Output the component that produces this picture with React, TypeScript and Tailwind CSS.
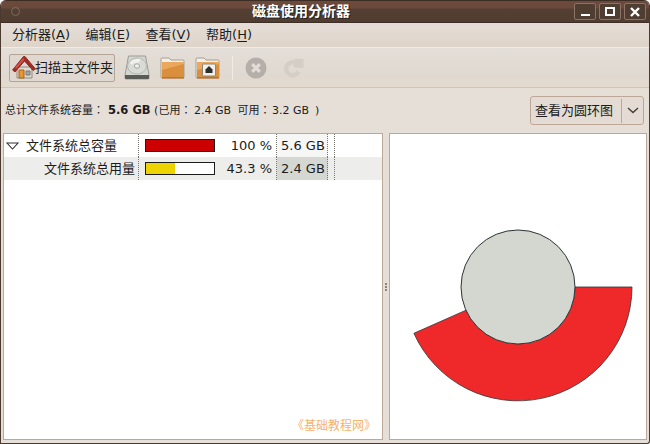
import React from "react";

const uiFont = { fontFamily: '"DejaVu Sans", "Noto Sans CJK SC", sans-serif' };

function HomeIcon() {
  return (
    <svg width="24" height="25" viewBox="0 0 24 25" className="shrink-0">
      <path d="M5 12 H20 V23 H5 Z" fill="#dedbd5" stroke="#8f8b84" />
      <path d="M7 15 H12 V23 H7 Z" fill="#e8962f" stroke="#a8651b" />
      <path d="M14 16 H18 V20 H14 Z" fill="#a5a9a6" stroke="#777" />
      <path d="M0.5 15 L11.5 1.5 H13 L23.5 14 L21 15.5 L12.5 6 L3 17 Z" fill="#a52a24" stroke="#7d1f1b" strokeWidth="0.8" />
      <path d="M3 12.5 L11.5 3 L12 5 L4 14 Z" fill="#d8564c" />
    </svg>
  );
}

function DiskIcon() {
  return (
    <svg width="26" height="25" viewBox="0 0 26 25">
      <path d="M4.5 1 H21.5 L25 20 V23 Q25 24 24 24 H2 Q1 24 1 23 V20 Z" fill="#d4d6d0" stroke="#9a9c96" />
      <path d="M1 20 H25 V23 Q25 24 24 24 H2 Q1 24 1 23 Z" fill="#5a5a56" />
      <ellipse cx="13" cy="11" rx="9.5" ry="8" fill="#d9dbd6" stroke="#b4b6b0" />
      <ellipse cx="13" cy="11" rx="2.6" ry="2.2" fill="#f0f0ee" stroke="#a5a7a1" />
      <path d="M6 8 Q10 3 17 4 L14 8 Q10 7 8 10 Z" fill="#f1f2ef" />
    </svg>
  );
}

function FolderIcon({ home }: { home?: boolean }) {
  return (
    <svg width="25" height="22" viewBox="0 0 25 22">
      <path d="M1 2 Q1 1 2 1 H9 L11 3 H23 Q24 3 24 4 V20 Q24 21 23 21 H2 Q1 21 1 20 Z" fill="#f0efe9" stroke="#a89f8f" />
      <path d="M2 5 H24 V21 H2 Z" fill="#eba85c" />
      <path d="M2 13 L24 7 V20.5 H2 Z" fill="#d98f3c" />
      <path d="M2 20 H24 V21.5 H2 Z" fill="#c2702a" />
      {home && (
        <g>
          <rect x="7.5" y="7" width="13" height="12" rx="1" fill="#f1f0ec" stroke="#8b8676" />
          <path d="M14 9 L17.5 12.5 V16 H10.5 V12.5 Z" fill="#2e2e2c" />
        </g>
      )}
    </svg>
  );
}

function StopIcon() {
  return (
    <svg width="22" height="22" viewBox="0 0 22 22">
      <circle cx="11" cy="11" r="10.5" fill="#b4afa9" />
      <path d="M7.2 7.2 L14.8 14.8 M14.8 7.2 L7.2 14.8" stroke="#e2dcd5" strokeWidth="3.2" />
    </svg>
  );
}

function RefreshIcon() {
  return (
    <svg width="23" height="22" viewBox="0 0 23 22">
      <path d="M16.5 14.5 A6.5 6.5 0 1 1 14.5 6.5" fill="none" stroke="#d4cec6" strokeWidth="4.4" />
      <path d="M13 1.5 L21.5 2 L21.5 11 L11.5 10.5 Z" fill="#d4cec6" />
    </svg>
  );
}

function WindowButton({ children }: { children: React.ReactNode }) {
  return (
    <div className="w-[22px] h-[17px] rounded-[2px] border border-[#8b7466] bg-[#4f3d32] flex items-center justify-center">
      {children}
    </div>
  );
}

function Menu({ label, hotkey }: { label: string; hotkey: string }) {
  return (
    <span>
      {label}(<span className="underline underline-offset-2">{hotkey}</span>)
    </span>
  );
}

function Colon() {
  return <span className="font-['Noto_Sans_CJK_TC']">：</span>;
}

function TreeRow({
  name,
  percent,
  size,
  fill,
  color,
  child,
}: {
  name: string;
  percent: string;
  size: string;
  fill: string;
  color: string;
  child?: boolean;
}) {
  const dotted = "border-r border-dotted border-[#77776f]";
  return (
    <div className={`flex h-[23px] text-[13px] text-[#1c1c1c] ${child ? "bg-[#edeeeb]" : "bg-white"}`}>
      <div className={`w-[135px] shrink-0 flex items-center ${dotted} ${child ? "justify-end pr-[3px]" : "pl-[2px]"}`}>
        {!child && (
          <svg width="14" height="8" viewBox="0 0 14 8" className="mr-[6px]">
            <path d="M1 1 H12 L6.5 7 Z" fill="none" stroke="#333" strokeWidth="1.1" />
          </svg>
        )}
        {name}
      </div>
      <div className={`w-[138px] shrink-0 flex items-center pl-[6px] pr-[4px] justify-between ${dotted}`}>
        <div className="w-[70px] h-[13px] border border-[#1c1c1c] bg-white">
          <div className="h-full" style={{ width: fill, backgroundColor: color }} />
        </div>
        <span>{percent}</span>
      </div>
      <div className={`w-[51px] shrink-0 flex items-center pl-[4px] ${dotted} ${child ? "bg-[#d5d7d3]" : "bg-[#f6f6f4]"}`}>{size}</div>
      <div className={`w-[7px] shrink-0 ${dotted}`} />
      <div className="flex-1" />
    </div>
  );
}

export default function App() {
  return (
    <div
      className="w-[650px] h-[444px] overflow-hidden flex flex-col bg-[#e6dfd8] border-x border-b border-[#4a3a2f] rounded-t-[6px] rounded-br-[3px]"
      style={uiFont}
    >
      <div className="h-[23px] shrink-0 bg-[linear-gradient(#6b4a3b_0,#6b4a3b_7px,#543f33_8px,#503c30_100%)] border-y border-[#3d2e25] flex items-center px-[10px] relative">
        <div className="w-[9px] h-[9px] rounded-full border border-[#7b6b60]" />
        <div className="flex-1 ml-[8px] text-center font-bold text-[14px] text-white [text-shadow:1px_1px_0_#222]">磁盘使用分析器</div>
        <div className="flex gap-[3px] -mr-[7px]">
          <WindowButton><div className="w-[9px] h-[2px] mt-[6px] bg-white" /></WindowButton>
          <WindowButton><div className="w-[10px] h-[9px] border-2 border-white" /></WindowButton>
          <WindowButton>
            <svg width="10" height="10" viewBox="0 0 10 10"><path d="M1 1 L9 9 M9 1 L1 9" stroke="#fff" strokeWidth="2.4" /></svg>
          </WindowButton>
        </div>
      </div>

      <div className="h-[25px] shrink-0 flex items-center gap-[15.5px] pl-[11px] text-[13px] text-[#1c1c1c] bg-[linear-gradient(#e5ded8,#ded4c9)] border-b border-[#f0ebe4]">
        <Menu label="分析器" hotkey="A" />
        <Menu label="编辑" hotkey="E" />
        <Menu label="查看" hotkey="V" />
        <Menu label="帮助" hotkey="H" />
      </div>

      <div className="h-[40px] shrink-0 flex items-center pl-[8px] bg-[linear-gradient(#e4ded8,#e0d9d1_70%,#e4dacd)] border-b border-[#cfc5b8]">
        <div className="w-[106px] h-[28px] flex items-center pl-[2px] text-[13px] text-[#1c1c1c] bg-[#e0d8d0] border border-[#b5a595] rounded-[2px]">
          <HomeIcon />
          <span className="whitespace-nowrap -ml-[1px]">扫描主文件夹</span>
        </div>
        <div className="flex items-center ml-[9px] gap-[10px]">
          <DiskIcon />
          <FolderIcon />
          <FolderIcon home />
        </div>
        <div className="w-px h-[24px] bg-[#cfc7bd] ml-[12px] border-r border-[#f0ebe4]" />
        <div className="flex items-center ml-[12px] gap-[15px]">
          <StopIcon />
          <RefreshIcon />
        </div>
      </div>

      <div className="h-[45px] shrink-0 flex items-center justify-between pl-[4px] pr-[5px] text-[12px] text-[#1c1c1c]">
        <div className="text-[11px] whitespace-nowrap">
          总计文件系统容量<Colon /><b className="text-[11.5px] ml-[4px]">5.6 GB</b> (已用<Colon /><span className="-ml-[1px]"> 2.4 GB</span><span className="ml-[3px]"> 可用</span><Colon /><span className="ml-[1.5px]">3.2 GB</span><span className="ml-[6px]">)</span>
        </div>
        <div className="w-[114px] h-[29px] flex items-center rounded-[3px] border border-[#bda898] bg-[#e4dcd4] text-[13px]">
          <span className="pl-[4px] w-[91px] whitespace-nowrap border-r border-[#bda898] h-[24px] leading-[24px]">查看为圆环图</span>
          <svg width="12" height="7" viewBox="0 0 12 7" className="ml-[5px]">
            <path d="M1 1 L6 5.5 L11 1" fill="none" stroke="#4a4036" strokeWidth="1.5" />
          </svg>
        </div>
      </div>

      <div className="flex-1 min-h-0 flex px-[2px] pb-[3px]">
        <div className="w-[380px] shrink-0 flex flex-col border border-[#bda898] bg-white">
          <TreeRow name="文件系统总容量" percent="100 %" size="5.6 GB" fill="100%" color="#cc0000" />
          <TreeRow name="文件系统总用量" percent="43.3 %" size="2.4 GB" fill="43%" color="#edd400" child />
          <div className="flex-1 flex items-end justify-end pr-[12px] pb-[7px]">
            <span className="text-[12px] leading-[12px] text-[#f6b26b] whitespace-nowrap">
              <span className="-ml-[6px]">《</span>基础教程网<span className="-mr-[6px]">》</span>
            </span>
          </div>
        </div>
        <div className="w-[6px] shrink-0 flex flex-col items-center justify-center gap-px">
          <div className="w-[2px] h-[2px] bg-[#8f8478]" />
          <div className="w-[2px] h-[2px] bg-[#8f8478]" />
          <div className="w-[2px] h-[2px] bg-[#8f8478]" />
        </div>
        <div className="flex-1 border border-[#bda898] bg-white">
          <svg width="256" height="306" viewBox="0 0 256 306" className="block">
            <g transform="translate(-390 -134)">
              <path d="M632 287 A114 114 0 0 1 413.9 333.3 L466 310.2 A57 57 0 0 0 575 287 Z" fill="#ef2929" stroke="#2e3436" strokeWidth="0.8" />
              <circle cx="518" cy="287" r="57" fill="#d3d7cf" stroke="#2e3436" strokeWidth="1" />
            </g>
          </svg>
        </div>
      </div>
    </div>
  );
}
